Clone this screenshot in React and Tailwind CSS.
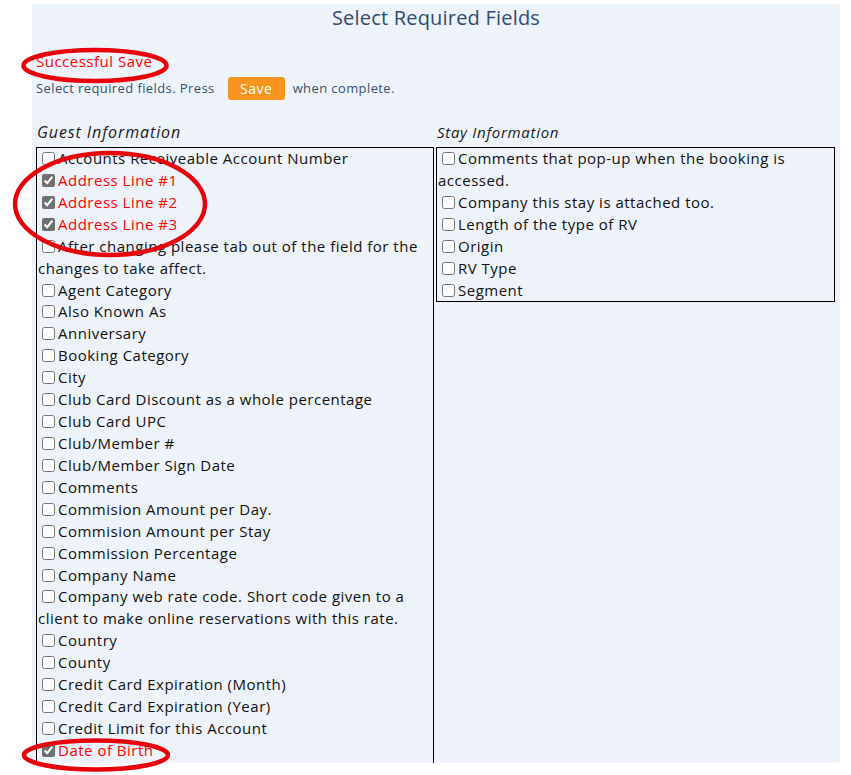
const guestFields = [
  { label: 'Accounts Receiveable Account Number' },
  { label: 'Address Line #1', on: true },
  { label: 'Address Line #2', on: true },
  { label: 'Address Line #3', on: true },
  { label: 'After changing please tab out of the field for the changes to take affect.' },
  { label: 'Agent Category' },
  { label: 'Also Known As' },
  { label: 'Anniversary' },
  { label: 'Booking Category' },
  { label: 'City' },
  { label: 'Club Card Discount as a whole percentage' },
  { label: 'Club Card UPC' },
  { label: 'Club/Member #' },
  { label: 'Club/Member Sign Date' },
  { label: 'Comments' },
  { label: 'Commision Amount per Day.' },
  { label: 'Commision Amount per Stay' },
  { label: 'Commission Percentage' },
  { label: 'Company Name' },
  { label: 'Company web rate code. Short code given to a client to make online reservations with this rate.' },
  { label: 'Country' },
  { label: 'County' },
  { label: 'Credit Card Expiration (Month)' },
  { label: 'Credit Card Expiration (Year)' },
  { label: 'Credit Limit for this Account' },
  { label: 'Date of Birth', on: true },
]

const stayFields = [
  { label: 'Comments that pop-up when the booking is accessed.' },
  { label: 'Company this stay is attached too.' },
  { label: 'Length of the type of RV' },
  { label: 'Origin' },
  { label: 'RV Type' },
  { label: 'Segment' },
]

const font = { fontFamily: '"Open Sans", "Liberation Sans", sans-serif' }

function Field({ label, on }) {
  return (
    <div className={on ? 'text-[#ff0000]' : 'text-[#111]'}>
      <input type="checkbox" defaultChecked={on} className="accent-[#707070] align-[-1px] mt-[3px] mr-[3px] mb-[3px] ml-[4px]" />
      {label}
    </div>
  )
}

function FieldBox({ fields, className = '' }) {
  return (
    <div className={'border border-black px-px text-[15px] leading-[21.92px] tracking-[0.5px] ' + className}>
      {fields.map((f) => (
        <Field key={f.label} {...f} />
      ))}
    </div>
  )
}

export default function App() {
  return (
    <div className="relative h-[775px] bg-white" style={font}>
      <div className="ml-[32px] mt-[4px] w-[808px] h-[759px] bg-[#eef3fa] rounded-[3px] overflow-hidden">
        <h1 className="text-center text-[20px] leading-[28px] tracking-[0.2px] text-[#2f4c6e]">Select Required Fields</h1>

        <div className="mt-[19px] pl-[4px] text-[15px] leading-[20px] tracking-[0.5px] text-[#ff0000]">Successful Save</div>

        <div className="mt-[6px] pl-[4px] flex items-center text-[13px] tracking-[0.4px] text-[#3b5169]">
          <span>Select required fields. Press</span>
          <button className="ml-[13px] mr-[8px] h-[23px] w-[57px] rounded-[3px] bg-[#f7941d] text-white text-[14px] tracking-[0.5px]">Save</button>
          <span>when complete.</span>
        </div>

        <div className="mt-[22px] grid grid-cols-[398px_399px] gap-[2px] pl-[4px] items-start">
          <div>
            <div className="pl-px text-[16px] italic leading-[20px] tracking-[0.9px] text-[#1a1a1a]">Guest Information</div>
            <div className="mt-[5px]">
              <FieldBox fields={guestFields} className="min-h-[640px]" />
            </div>
          </div>
          <div>
            <div className="pl-px text-[15px] italic leading-[20px] tracking-[0.7px] text-[#1a1a1a]">Stay Information</div>
            <div className="mt-[5px]">
              <FieldBox fields={stayFields} />
            </div>
          </div>
        </div>
      </div>

      {/* red annotation marks drawn over the screenshot */}
      <svg className="absolute inset-0 pointer-events-none" width="851" height="775">
        <ellipse cx="95" cy="61.5" rx="71.5" ry="15.5" fill="none" stroke="#e8000a" strokeWidth="4.5" />
        <ellipse cx="110" cy="200" rx="95" ry="51" fill="none" stroke="#e8000a" strokeWidth="4.5" />
        <ellipse cx="96" cy="751" rx="72" ry="14.5" fill="none" stroke="#e8000a" strokeWidth="4.5" />
      </svg>
    </div>
  )
}
